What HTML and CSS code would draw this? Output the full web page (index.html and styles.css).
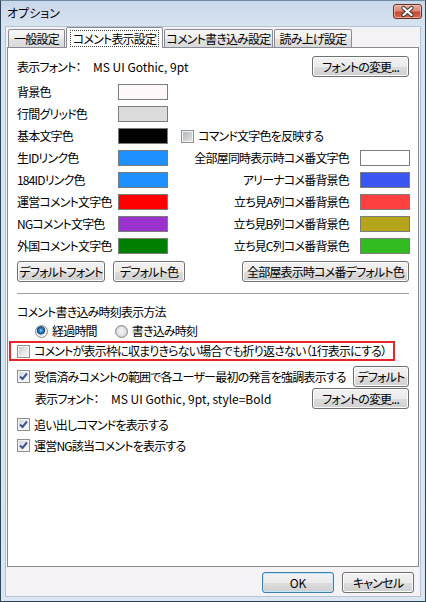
FILE: index.html
```html
<!DOCTYPE html>
<html lang="ja">
<head>
<meta charset="utf-8">
<title>オプション</title>
<link rel="stylesheet" href="styles.css">
</head>
<body>
<div class="window">
  <div class="titlebar">
    <span class="title">オプション</span>
    <span class="close">
      <svg width="29" height="15" viewBox="0 0 29 15">
        <path d="M10.5 4 L18.5 11 M18.5 4 L10.5 11" stroke="#3b3b3b" stroke-width="4.2" stroke-linecap="round"/>
        <path d="M10.5 4 L18.5 11 M18.5 4 L10.5 11" stroke="#ffffff" stroke-width="2.2" stroke-linecap="round"/>
      </svg>
    </span>
  </div>
  <div class="client">
    <div class="tabs">
      <div class="tab t1">一般設定</div>
      <div class="tab active t2"><span class="focus">コメント表示設定</span></div>
      <div class="tab t3">コメント書き込み設定</div>
      <div class="tab t4">読み上げ設定</div>
    </div>
    <div class="panel">
      <div class="row font-row">
        <div class="font-info"><span class="font-label">表示フォント：</span><span class="latin">MS UI Gothic, 9pt</span></div>
        <button class="btn btn-font">フォントの変更...</button>
      </div>

      <div class="colors">
        <span class="lbl">背景色</span><span class="sw c-bg"></span><span></span><span></span>
        <span class="lbl">行間グリッド色</span><span class="sw c-grid"></span><span></span><span></span>
        <span class="lbl">基本文字色</span><span class="sw c-black"></span>
        <span class="check-cell"><span class="cb dim"></span><span>コマンド文字色を反映する</span></span>
        <span class="lbl">生IDリンク色</span><span class="sw c-blue"></span><span class="rlbl">全部屋同時表示時コメ番文字色</span><span class="sw c-white"></span>
        <span class="lbl">184IDリンク色</span><span class="sw c-blue"></span><span class="rlbl">アリーナコメ番背景色</span><span class="sw c-arena"></span>
        <span class="lbl">運営コメント文字色</span><span class="sw c-red"></span><span class="rlbl">立ち見A列コメ番背景色</span><span class="sw c-a"></span>
        <span class="lbl">NGコメント文字色</span><span class="sw c-purple"></span><span class="rlbl">立ち見B列コメ番背景色</span><span class="sw c-b"></span>
        <span class="lbl">外国コメント文字色</span><span class="sw c-green"></span><span class="rlbl">立ち見C列コメ番背景色</span><span class="sw c-c"></span>
      </div>

      <div class="row btn-row">
        <button class="btn w-deffont">デフォルトフォント</button>
        <button class="btn w-defcolor">デフォルト色</button>
        <button class="btn w-defroom">全部屋表示時コメ番デフォルト色</button>
      </div>

      <div class="sep"></div>

      <div class="heading">コメント書き込み時刻表示方法</div>
      <div class="radio-row">
        <span class="radio-item"><span class="rb on"></span><span>経過時間</span></span>
        <span class="radio-item"><span class="rb"></span><span>書き込み時刻</span></span>
      </div>

      <div class="highlight">
        <span class="cb"></span><span>コメントが表示枠に収まりきらない場合でも折り返さない（1行表示にする）</span>
      </div>

      <div class="row check-row first-check">
        <span class="check-item"><span class="cb on"><svg width="11" height="11" viewBox="0 0 11 11"><path d="M2 5.5 L4.5 8 L9 2.5" fill="none" stroke="#3f5590" stroke-width="2"/></svg></span><span>受信済みコメントの範囲で各ユーザー最初の発言を強調表示する</span></span>
        <button class="btn w-def">デフォルト</button>
      </div>
      <div class="row font-row2">
        <div class="font-info"><span class="font-label">表示フォント：</span><span class="latin">MS UI Gothic, 9pt, style=Bold</span></div>
        <button class="btn btn-font">フォントの変更...</button>
      </div>
      <div class="row check-row gap-check">
        <span class="check-item"><span class="cb on"><svg width="11" height="11" viewBox="0 0 11 11"><path d="M2 5.5 L4.5 8 L9 2.5" fill="none" stroke="#3f5590" stroke-width="2"/></svg></span><span>追い出しコマンドを表示する</span></span>
      </div>
      <div class="row check-row">
        <span class="check-item"><span class="cb on"><svg width="11" height="11" viewBox="0 0 11 11"><path d="M2 5.5 L4.5 8 L9 2.5" fill="none" stroke="#3f5590" stroke-width="2"/></svg></span><span>運営NG該当コメントを表示する</span></span>
      </div>
    </div>
    <div class="footer">
      <button class="btn btn-ok"><span class="latin">OK</span></button>
      <button class="btn btn-cancel">キャンセル</button>
    </div>
  </div>
</div>
</body>
</html>
```

FILE: styles.css
```css
* { box-sizing: border-box; }

html, body {
  margin: 0;
  padding: 0;
  background: #ffffff;
}

body {
  font-family: "Noto Sans CJK JP", "Liberation Sans", sans-serif;
  font-size: 12px;
  line-height: 16px;
  color: #000;
  font-feature-settings: "palt";
  letter-spacing: -0.8px;
}

.latin { letter-spacing: 0; }

.window {
  width: 426px;
  height: 602px;
  border: 1px solid #2c4656;
  border-top-color: #6f8ba0;
  background: linear-gradient(#c8d7ea 0, #d8e3f1 24px, #dbe5f2 100%);
  display: flex;
  flex-direction: column;
}

.titlebar {
  height: 25px;
  flex: none;
  display: flex;
  justify-content: space-between;
  align-items: flex-start;
  padding: 0 3px 0 6px;
}

.title {
  margin-top: 4px;
  font-size: 12px;
  line-height: 16px;
  letter-spacing: 0;
  color: #000;
}

.close {
  margin-top: 3px;
  width: 29px;
  height: 15px;
  border: 1px solid #6b2e24;
  border-radius: 3px;
  background: linear-gradient(#e9a99b 0%, #dc8a78 45%, #c44a32 55%, #d76a4e 100%);
  box-shadow: inset 0 0 0 1px rgba(255, 220, 210, 0.55);
  display: flex;
  align-items: center;
  justify-content: center;
}

.close svg { display: block; margin: -1px; }

.client {
  flex: 1;
  margin: 0 4px 4px 4px;
  border: 1px solid #b3c3d5;
  background: #f4f2f4;
  display: flex;
  flex-direction: column;
  padding: 0 1px;
}

/* tabs */
.tabs {
  height: 20px;
  flex: none;
  display: flex;
  align-items: flex-end;
  gap: 1px;
  padding-left: 1px;
  position: relative;
  z-index: 2;
}

.tab {
  height: 18px;
  border: 1px solid #898c95;
  border-bottom: none;
  border-radius: 2px 2px 0 0;
  background: linear-gradient(#f7f7f7 0%, #ededed 50%, #e2e2e2 51%, #dadada 100%);
  display: flex;
  align-items: center;
  justify-content: center;
  white-space: nowrap;
  line-height: 14px;
}

.tab.active {
  height: 21px;
  margin-bottom: -1px;
  background: #ffffff;
}

.focus {
  border: 1px dotted #444;
  padding: 0 2px;
  line-height: 15px;
}

.t1 { width: 57px; }
.t2 { width: 97px; }
.t3 { width: 109px; }
.t4 { width: 78px; }

/* panel */
.panel {
  height: 520px;
  flex: none;
  border: 1px solid #898c95;
  background: #ffffff;
  padding: 8px 8px 0 9px;
  position: relative;
  z-index: 1;
}

.row {
  display: flex;
  align-items: center;
  height: 21px;
}

.font-row { justify-content: space-between; }

.font-info { display: flex; align-items: center; white-space: nowrap; }
.font-label { width: 76px; flex: none; }

.btn {
  height: 21px;
  border: 1px solid #707070;
  border-radius: 3px;
  background: linear-gradient(#f2f2f2 0%, #ebebeb 50%, #dddddd 51%, #cfcfcf 100%);
  box-shadow: inset 0 0 0 1px #fcfcfc;
  font: inherit;
  font-feature-settings: "palt";
  letter-spacing: -0.8px;
  color: #000;
  padding: 0;
  line-height: 17px;
  white-space: nowrap;
  flex: none;
}

.btn-font { width: 97px; margin-right: 1px; }

/* colour grid */
.colors {
  margin-top: 4px;
  display: grid;
  grid-template-columns: 101px 50px 1fr 50px;
  grid-auto-rows: 22px;
  align-items: center;
}

.lbl { white-space: nowrap; }

.rlbl {
  text-align: right;
  padding-right: 11px;
  white-space: nowrap;
}

.check-cell {
  grid-column: 3 / 5;
  display: flex;
  align-items: center;
  gap: 4px;
  padding-left: 13px;
  white-space: nowrap;
}

.sw {
  height: 16px;
  width: 50px;
  border: 1px solid #7c7c7c;
}

.c-bg { background: #fff8fb; }
.c-grid { background: #dcdcdc; }
.c-black { background: #000000; }
.c-blue { background: #1e90ff; }
.c-red { background: #ff0000; }
.c-purple { background: #9932cc; }
.c-green { background: #008000; }
.c-white { background: #ffffff; }
.c-arena { background: #3a55f0; }
.c-a { background: #ff4040; }
.c-b { background: #b5a51a; }
.c-c { background: #33bb22; }

.btn-row { margin-top: 4px; gap: 8px; }
.w-deffont { width: 88px; }
.w-defcolor { width: 72px; }
.w-defroom { width: 167px; margin-left: auto; margin-right: 1px; }

.sep {
  margin-top: 11px;
  height: 1px;
  background: #a0a0a0;
  margin-right: 1px;
}

.heading {
  margin-top: 10px;
  height: 16px;
  white-space: nowrap;
}

.radio-row {
  margin-top: 1px;
  height: 20px;
  display: flex;
  align-items: center;
  padding-left: 18px;
  gap: 18px;
}

.radio-item {
  display: flex;
  align-items: center;
  gap: 4px;
  white-space: nowrap;
}

.rb {
  width: 13px;
  height: 13px;
  border-radius: 50%;
  border: 1px solid #8a8a8a;
  background: radial-gradient(circle at 50% 50%, #f6f6f6 0, #e2e4e7 4px, #c9ccd1 5.5px, #f3f3f3 6px);
  flex: none;
}

.rb.on {
  background: radial-gradient(circle at 45% 40%, #9fdcff 0, #3a86c8 1.6px, #1b5e9e 3.2px, #0f3f70 3.8px, #dfe2e6 4.4px, #f4f4f4 6px);
}

.cb {
  width: 13px;
  height: 13px;
  border: 1px solid #8e8f8f;
  background: #f4f4f4;
  position: relative;
  flex: none;
}

.cb::before {
  content: "";
  position: absolute;
  left: 1px;
  top: 1px;
  right: 1px;
  bottom: 1px;
  background: linear-gradient(135deg, #c6cace 0%, #e8e9ea 60%, #f6f6f6 100%);
}

.cb.dim::before {
  background: linear-gradient(135deg, #b2b6bb 0%, #cfd1d4 60%, #e2e2e2 100%);
}

.cb.on::before {
  background: linear-gradient(135deg, #d3d6da 0%, #eef0f2 60%, #fafafa 100%);
}

.cb svg {
  position: absolute;
  left: 0;
  top: 0;
}

.highlight {
  margin-left: -8px;
  width: 386px;
  height: 20px;
  border: 2px solid #e8252b;
  display: flex;
  align-items: center;
  gap: 4px;
  padding-left: 6px;
  white-space: nowrap;
}

.check-row { justify-content: space-between; }

.check-item {
  display: flex;
  align-items: center;
  gap: 4px;
  white-space: nowrap;
}

.first-check { margin-top: 5px; }
.w-def { width: 56px; margin-right: 1px; }

.font-row2 {
  margin-top: 1px;
  justify-content: space-between;
  padding-left: 18px;
}

.gap-check { margin-top: 5px; }

/* footer */
.footer {
  flex: 1;
  display: flex;
  justify-content: flex-end;
  align-items: flex-start;
  padding: 5px 5px 0 0;
  gap: 8px;
}

.btn-ok {
  width: 72px;
  border-color: #3c7fb1;
  box-shadow: inset 0 0 0 1px #bfe6f9;
}

.btn-cancel { width: 72px; }
```
